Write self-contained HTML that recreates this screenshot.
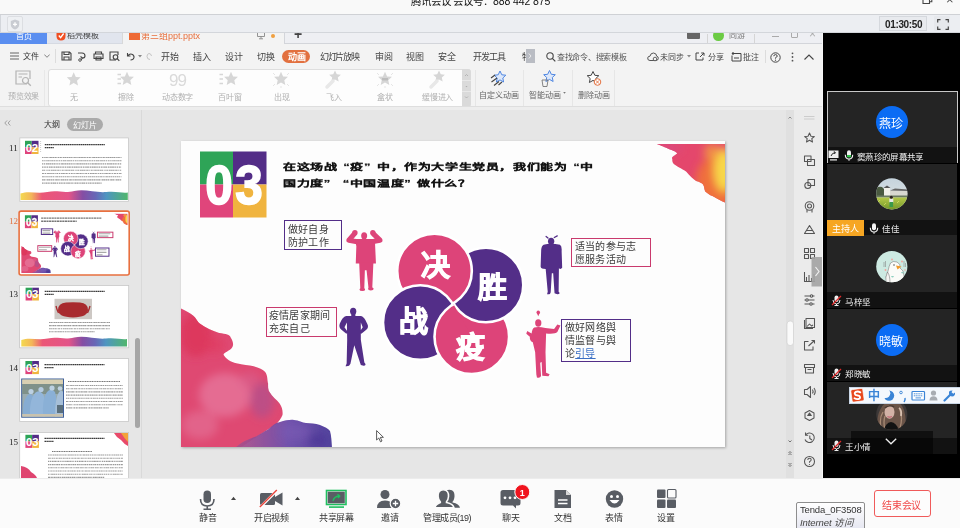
<!DOCTYPE html>
<html lang="zh-CN"><head><meta charset="utf-8">
<style>
*{margin:0;padding:0;box-sizing:border-box}
html,body{width:960px;height:528px;overflow:hidden;background:#fff;font-family:"Liberation Sans",sans-serif}
.a{position:absolute}
#title{left:0;top:0;width:960px;height:14px;background:#f9f9f9;border-bottom:1px solid #d9dadd}
#gbar{left:0;top:14px;width:960px;height:19px;background:#eceef2;border-bottom:1px solid #d7d9dd}
#wps{left:0;top:33px;width:823px;height:445px;background:#f3f3f3;overflow:hidden}
#rp{left:823px;top:33px;width:137px;height:445px;background:#000}
#bot{left:0;top:478px;width:960px;height:50px;background:#fbfbfb}
.t{position:absolute;white-space:nowrap;will-change:transform}
</style></head><body>
<div style="position:absolute;left:0;top:0;width:960px;height:33px;z-index:5">
<!-- title bar -->
<div class="a" style="left:0;top:0;width:960px;height:15px;background:#f9f9f9;border-bottom:1px solid #cfd1d5"></div>
<div class="t" style="left:410.5px;top:-7.5px;font-size:10.5px;color:#111;letter-spacing:-0.1px">腾讯会议 会议号：888 442 875</div>
<svg class="a" style="left:922px;top:-5px" width="11" height="10" viewBox="0 0 11 10"><path d="M1,2.5 H7.5 V8.5 H1 Z M3,2.5 V0.7 H9.8 V6.8 H7.5" fill="none" stroke="#444" stroke-width="1.1"/></svg>
<div class="t" style="left:946px;top:-8px;font-size:13px;color:#444">×</div>
<!-- grey bar -->
<div class="a" style="left:0;top:15px;width:960px;height:18px;background:#eceef2;border-bottom:1px solid #d3d6db;border-left:1px solid #d3d6db"></div>
<div class="a" style="left:7px;top:16px;width:16px;height:15.5px;border:1px solid #dcdee2;border-radius:2px;background:#eef0f3"></div>
<svg class="a" style="left:10.3px;top:18.7px" width="10" height="11" viewBox="0 0 10 11"><path d="M5,0.5 L9.2,2 L9.2,5.5 Q9.2,9 5,10.5 Q0.8,9 0.8,5.5 L0.8,2 Z" fill="#c9ccd2"/><path d="M5,3.3 V7.3 M3,5.3 H7" stroke="#fff" stroke-width="1.3"/></svg>
<div class="a" style="left:879px;top:16px;width:48px;height:15px;border:1px solid #d5d8dd;background:#e8eaee"></div>
<div class="t" style="left:884.5px;top:18.5px;font-size:10px;font-weight:bold;color:#222;letter-spacing:-0.35px">01:30:50</div>
<div class="a" style="left:934px;top:16px;width:16px;height:15px;background:#e6e8ec;border-radius:1px"></div>
<svg class="a" style="left:937px;top:18.5px" width="12" height="11" viewBox="0 0 12 11"><path d="M0.7,3.5 V0.7 H3.5 M8.5,0.7 H11.3 V3.5 M11.3,7.5 V10.3 H8.5 M3.5,10.3 H0.7 V7.5" fill="none" stroke="#444" stroke-width="1.2"/></svg>
</div>
<!-- WPS base -->
<div class="a" style="left:0;top:33px;width:823px;height:445px;background:#f3f3f3"></div>
<!-- tab strip -->
<div class="a" style="left:0;top:33px;width:46.5px;height:10.5px;background:#5a8ef0"></div>
<div class="t" style="left:15.5px;top:29.5px;font-size:8px;color:#fff">首页</div>
<div class="a" style="left:46.5px;top:33px;width:76px;height:10.5px;background:#e1e5ee;border-bottom:1px solid #d6dae2"></div>
<svg class="a" style="left:55.5px;top:32px" width="10" height="9" viewBox="0 0 10 9"><path d="M0.5,0 H9.5 V4 Q9.5,8.5 5,8.5 Q0.5,8.5 0.5,4 Z" fill="#f04e23"/><path d="M2.8,3.5 L4.6,5.6 L7.6,1.5" fill="none" stroke="#fff" stroke-width="1.3"/></svg>
<div class="t" style="left:67px;top:29px;font-size:8px;color:#444">稻壳模板</div>
<div class="a" style="left:122px;top:33px;width:1px;height:11px;background:#d8d8d8"></div>
<div class="a" style="left:129px;top:32px;width:11px;height:8px;background:#ee6a36"></div>
<div class="t" style="left:141px;top:28.5px;font-size:9px;color:#e8703f">第三组ppt.pptx</div>
<svg class="a" style="left:257px;top:33px" width="8" height="7" viewBox="0 0 8 7"><path d="M0.5,0 V3.5 H7.5 V0 M4,3.5 V5.5 M2,5.8 H6" fill="none" stroke="#888" stroke-width="0.9"/></svg>
<div class="a" style="left:271px;top:34px;width:4px;height:4px;background:#f0a040;border-radius:50%"></div>
<div class="a" style="left:283.5px;top:33px;width:540px;height:11px;background:#eeeff3;border-left:1px solid #d3d5da;border-bottom:1px solid #d3d5da"></div>
<div class="t" style="left:294px;top:26px;font-size:14px;font-weight:bold;color:#444">+</div>
<div class="a" style="left:687px;top:33px;width:13px;height:6px;background:#666;border-radius:0 0 1px 1px"></div>
<div class="a" style="left:707px;top:34px;width:1px;height:9px;background:#d5d5d5"></div>
<div class="a" style="left:713px;top:30px;width:10.5px;height:10.5px;background:#6ccb45;border-radius:50%"></div>
<div class="t" style="left:729px;top:29px;font-size:8px;color:#777">同游</div>
<div class="a" style="left:754px;top:34px;width:1px;height:9px;background:#d5d5d5"></div>
<div class="a" style="left:771.5px;top:35.5px;width:7px;height:1px;background:#aaa"></div>
<div class="a" style="left:791px;top:31px;width:7px;height:7px;border:1px solid #aaa;border-radius:1px"></div>
<div class="t" style="left:809px;top:27px;font-size:12px;color:#aaa">×</div>
<!-- menu row -->
<svg class="a" style="left:10px;top:52px" width="9" height="8" viewBox="0 0 9 8"><path d="M0,1 H9 M0,4 H9 M0,7 H9" stroke="#666" stroke-width="1.1"/></svg>
<div class="t" style="left:23px;top:50px;font-size:8px;letter-spacing:-0.3px;color:#333">文件</div>
<svg class="a" style="left:43.5px;top:54px" width="6" height="4" viewBox="0 0 6 4"><path d="M0.3,0.5 L3,3.3 L5.7,0.5" fill="none" stroke="#777" stroke-width="0.9"/></svg>
<div class="a" style="left:55px;top:49px;width:1px;height:14px;background:#dcdcdc"></div>
<svg class="a" style="left:61px;top:51px" width="11" height="10" viewBox="0 0 11 10"><path d="M1,1 H8.5 L10,2.5 V9 H1 Z M3,1 V3.5 H8 V1 M3,9 V6 H8 V9" fill="none" stroke="#444" stroke-width="1.1"/></svg>
<svg class="a" style="left:77px;top:51px" width="11" height="11" viewBox="0 0 11 11"><path d="M1,2 H5 Q8,2 8,5 Q8,7 5.5,7 M5.5,7 L3.5,5.5 M5.5,7 L4,8.8" fill="none" stroke="#444" stroke-width="1.1"/><circle cx="3" cy="9" r="1.3" fill="none" stroke="#444" stroke-width="0.9"/></svg>
<svg class="a" style="left:93px;top:51px" width="11" height="10" viewBox="0 0 11 10"><path d="M2.5,3 V1 H8.5 V3 M1,3 H10 V7.5 H1 Z M3,6 H8 V9 H3 Z" fill="none" stroke="#444" stroke-width="1.1"/></svg>
<svg class="a" style="left:109px;top:51px" width="11" height="11" viewBox="0 0 11 11"><path d="M7,9 H1 V1 H9 V4" fill="none" stroke="#444" stroke-width="1.1"/><circle cx="6.5" cy="6" r="2.3" fill="none" stroke="#444" stroke-width="1.1"/><path d="M8.2,7.7 L10.3,9.8" stroke="#444" stroke-width="1.2"/></svg>
<svg class="a" style="left:126px;top:52px" width="9" height="9" viewBox="0 0 9 9"><path d="M1.5,1 V4 H4.5 M1.8,3.8 Q3.5,1.5 5.8,2.2 Q8.3,3 8,5.5 Q7.5,8 4.5,8" fill="none" stroke="#444" stroke-width="1.1"/></svg>
<svg class="a" style="left:138px;top:55px" width="4" height="3" viewBox="0 0 4 3"><path d="M0,0 H4 L2,2.5 Z" fill="#888"/></svg>
<svg class="a" style="left:146px;top:52px" width="7" height="9" viewBox="0 0 7 9"><path d="M5.5,4 Q5,1.5 3,1.5 Q1,1.8 1,4.5 Q1.2,7.5 4,7.5" fill="none" stroke="#c4c4c4" stroke-width="1"/></svg>
<div class="t" style="left:160.5px;top:50px;font-size:9px;letter-spacing:-0.4px;color:#444">开始</div>
<div class="t" style="left:192.5px;top:50px;font-size:9px;letter-spacing:-0.4px;color:#444">插入</div>
<div class="t" style="left:225px;top:50px;font-size:9px;letter-spacing:-0.4px;color:#444">设计</div>
<div class="t" style="left:256.5px;top:50px;font-size:9px;letter-spacing:-0.4px;color:#444">切换</div>
<div class="a" style="left:281.5px;top:49.5px;width:28px;height:13px;background:#e2703f;border-radius:7px"></div>
<div class="t" style="left:287.5px;top:50px;font-size:9px;letter-spacing:-0.4px;font-weight:bold;color:#fff">动画</div>
<div class="t" style="left:319.5px;top:50px;font-size:9px;letter-spacing:-1.3px;color:#444">幻灯片放映</div>
<div class="t" style="left:374.5px;top:50px;font-size:9px;letter-spacing:-0.4px;color:#444">审阅</div>
<div class="t" style="left:406px;top:50px;font-size:9px;letter-spacing:-0.4px;color:#444">视图</div>
<div class="t" style="left:438px;top:50px;font-size:9px;letter-spacing:-0.4px;color:#444">安全</div>
<div class="t" style="left:472.5px;top:50px;font-size:9px;letter-spacing:-1px;color:#444">开发工具</div>
<div class="t" style="left:521.5px;top:50px;font-size:9px;color:#333;width:5px;overflow:hidden">特</div>
<div class="a" style="left:526px;top:48.5px;width:8.5px;height:14.5px;background:#b9bcc3"></div>
<svg class="a" style="left:528px;top:53px" width="4" height="6" viewBox="0 0 4 6"><path d="M0.8,0.5 L3,3 L0.8,5.5" fill="none" stroke="#eee" stroke-width="0.9"/></svg>
<svg class="a" style="left:545.5px;top:51.5px" width="10" height="10" viewBox="0 0 10 10"><circle cx="4" cy="4" r="3.2" fill="none" stroke="#444" stroke-width="1.1"/><path d="M6.3,6.3 L9.3,9.3" stroke="#444" stroke-width="1.2"/></svg>
<div class="t" style="left:556.5px;top:50.5px;font-size:8px;letter-spacing:-0.3px;color:#555">查找命令、搜索模板</div>
<svg class="a" style="left:646.5px;top:51.5px" width="12" height="10" viewBox="0 0 12 10"><path d="M3,8.5 Q0.5,8.5 0.7,6 Q1,4 3,4.2 Q3.5,1 6.5,1 Q9.5,1.2 9.7,4.2 Q11.5,4.5 11.3,6.5 Q11,8.5 9,8.5 Z" fill="none" stroke="#555" stroke-width="1"/><circle cx="8" cy="7" r="1.8" fill="#f3f3f3" stroke="#555" stroke-width="0.9"/></svg>
<div class="t" style="left:659.5px;top:50.5px;font-size:8px;letter-spacing:0px;color:#444">未同步</div>
<svg class="a" style="left:686.5px;top:55px" width="4" height="3" viewBox="0 0 4 3"><path d="M0,0 H4 L2,2.5 Z" fill="#888"/></svg>
<svg class="a" style="left:694.5px;top:52px" width="10" height="9" viewBox="0 0 10 9"><path d="M4,1 H1 V8 H8 V5.5 M5,5 L9,1 M6.2,1 H9 V3.8" fill="none" stroke="#444" stroke-width="1"/></svg>
<div class="t" style="left:707.5px;top:50.5px;font-size:8px;letter-spacing:0px;color:#444">分享</div>
<svg class="a" style="left:730.5px;top:51.5px" width="11" height="10" viewBox="0 0 11 10"><path d="M3,1.5 H10 V9 H1 V3.5 M3,6 H8 M1,1.5 H4" fill="none" stroke="#444" stroke-width="1"/><circle cx="2" cy="1.5" r="1.2" fill="#444"/></svg>
<div class="t" style="left:743px;top:50.5px;font-size:8px;letter-spacing:0px;color:#444">批注</div>
<div class="a" style="left:765px;top:50px;width:1px;height:13px;background:#dcdcdc"></div>
<svg class="a" style="left:770px;top:51.5px" width="11" height="11" viewBox="0 0 11 11"><circle cx="5.5" cy="5.5" r="4.7" fill="none" stroke="#444" stroke-width="1"/><path d="M3.8,4.2 Q3.8,2.6 5.5,2.6 Q7.2,2.6 7.2,4.1 Q7.2,5.1 5.5,5.7 V6.6" fill="none" stroke="#444" stroke-width="1"/><circle cx="5.5" cy="8.2" r="0.6" fill="#444"/></svg>
<svg class="a" style="left:791px;top:52px" width="3" height="10" viewBox="0 0 3 10"><circle cx="1.5" cy="1.3" r="0.9" fill="#555"/><circle cx="1.5" cy="5" r="0.9" fill="#555"/><circle cx="1.5" cy="8.7" r="0.9" fill="#555"/></svg>
<svg class="a" style="left:804px;top:53.5px" width="10" height="6" viewBox="0 0 10 6"><path d="M0.5,5.5 L5,1 L9.5,5.5" fill="none" stroke="#444" stroke-width="1.1"/></svg>
<!-- ribbon -->
<svg class="a" style="left:15px;top:70px" width="17" height="17" viewBox="0 0 17 17"><path d="M12,14 H1 V1 H15 V9" fill="none" stroke="#b4b4b4" stroke-width="1.2"/><path d="M3.5,4 H12.5 M3.5,7 H7" stroke="#b4b4b4" stroke-width="1.2"/><circle cx="10.5" cy="10.5" r="3" fill="none" stroke="#b4b4b4" stroke-width="1.2"/><path d="M12.7,12.7 L15.8,15.8" stroke="#b4b4b4" stroke-width="1.3"/></svg>
<div class="t" style="left:7.5px;top:89.5px;font-size:8px;letter-spacing:-0.2px;color:#b0b0b0">预览效果</div>
<div class="a" style="left:44px;top:70px;width:1px;height:36px;background:#e8e8e8"></div>
<div class="a" style="left:47.5px;top:69px;width:423px;height:37.5px;background:#fdfdfd;border:1px solid #dedede;border-radius:3px"></div>
<div class="a" style="left:462px;top:69px;width:8.5px;height:37.5px;background:#dadada;border-radius:0 3px 3px 0"></div>
<div class="a" style="left:462px;top:80px;width:8.5px;height:1px;background:#e8e8e8"></div>
<div class="a" style="left:462px;top:91px;width:8.5px;height:1px;background:#e8e8e8"></div>
<svg class="a" style="left:462px;top:70px" width="9" height="36" viewBox="0 0 9 36"><path d="M3,6 L4.5,4.5 L6,6" fill="none" stroke="#aaa" stroke-width="0.8"/><path d="M3.5,16 H5.5 L4.5,17.2 Z" fill="#aaa"/><path d="M3,26.5 L4.5,28 L6,26.5" fill="none" stroke="#aaa" stroke-width="0.8"/></svg>
<svg class="a" style="left:0;top:0" width="480" height="110" viewBox="0 0 480 110">
<defs><path id="st" d="M0,-7.2 L2.1,-2.6 L6.9,-2.2 L3.3,1.2 L4.3,6 L0,3.4 L-4.3,6 L-3.3,1.2 L-6.9,-2.2 L-2.1,-2.6 Z"/></defs>
<use href="#st" x="73.7" y="79.5" fill="#d6d6d6"/>
<use href="#st" x="127" y="79" fill="#d6d6d6"/><path d="M117.5,74.5 H121 M117.5,79 H121 M117.5,83.5 H121" stroke="#d6d6d6" stroke-width="1.3"/>
<text x="177.5" y="86" font-family="Liberation Sans" font-size="17" fill="#dadada" text-anchor="middle" letter-spacing="-1">99</text>
<use href="#st" x="231" y="79" fill="#d6d6d6"/><path d="M219.5,74.5 H223 M219.5,79 H223 M219.5,83.5 H223" stroke="#d6d6d6" stroke-width="1.3"/>
<use href="#st" x="281" y="79" fill="#d6d6d6"/><path d="M273,73 L275,75 M289,73 L287,75 M273,86 L275,84 M289,86 L287,84 M281,88 V86" stroke="#dedede" stroke-width="0.8"/>
<use href="#st" x="335" y="76.5" fill="#d6d6d6" transform="translate(335,76.5) scale(0.85) translate(-335,-76.5)"/><path d="M327,87 L333,81" stroke="#e8e8e8" stroke-width="3.5" stroke-linecap="round"/>
<use href="#st" x="385" y="79" fill="#d6d6d6"/><rect x="382" y="78" width="6" height="2.5" fill="#bdbdbd"/><path d="M377,73 L379,75 M393,73 L391,75 M377,86 L379,84 M393,86 L391,84 M385,88 V86" stroke="#dedede" stroke-width="0.8"/>
<use href="#st" x="439" y="76.5" fill="#d6d6d6" transform="translate(439,76.5) scale(0.85) translate(-439,-76.5)"/><path d="M431,87 L437,81" stroke="#e8e8e8" stroke-width="3.5" stroke-linecap="round"/>
</svg>
<div class="t" style="left:70px;top:91px;font-size:8px;color:#b0b0b0">无</div>
<div class="t" style="left:118px;top:91px;font-size:8px;letter-spacing:-0.2px;color:#b0b0b0">擦除</div>
<div class="t" style="left:162px;top:91px;font-size:8px;letter-spacing:-0.2px;color:#b0b0b0">动态数字</div>
<div class="t" style="left:218px;top:91px;font-size:8px;letter-spacing:-0.2px;color:#b0b0b0">百叶窗</div>
<div class="t" style="left:274px;top:91px;font-size:8px;letter-spacing:-0.2px;color:#b0b0b0">出现</div>
<div class="t" style="left:326px;top:91px;font-size:8px;letter-spacing:-0.2px;color:#b0b0b0">飞入</div>
<div class="t" style="left:377px;top:91px;font-size:8px;letter-spacing:-0.2px;color:#b0b0b0">盒状</div>
<div class="t" style="left:422px;top:91px;font-size:8px;letter-spacing:-0.2px;color:#b0b0b0">缓慢进入</div>
<div class="a" style="left:475px;top:70px;width:1px;height:36px;background:#e6e6e6"></div>
<div class="a" style="left:523px;top:70px;width:1px;height:36px;background:#e6e6e6"></div>
<div class="a" style="left:572px;top:70px;width:1px;height:36px;background:#e6e6e6"></div>
<div class="a" style="left:614px;top:70px;width:1px;height:36px;background:#e6e6e6"></div>
<svg class="a" style="left:480px;top:68px" width="140" height="22" viewBox="480 68 140 22">
<defs><path id="st2" d="M0,-6 L1.8,-2.2 L5.8,-1.8 L2.8,1 L3.6,5 L0,2.9 L-3.6,5 L-2.8,1 L-5.8,-1.8 L-1.8,-2.2 Z"/></defs>
<use href="#st2" x="500" y="77" fill="#dde8fa" stroke="#4f86e0" stroke-width="1"/>
<path d="M491,78 L495,75 M491.5,82 L497,78 M494,85.5 L499,81.5 M498.5,85 L502,82" stroke="#444" stroke-width="1.1"/>
<use href="#st2" x="549.5" y="76.5" fill="#dde8fa" stroke="#4f86e0" stroke-width="1"/>
<path d="M542,80 L548,80 L547,86.5 L543,86.5 Z" fill="none" stroke="#777" stroke-width="0.9"/>
<use href="#st2" x="593" y="77.5" fill="#fff" stroke="#444" stroke-width="1"/>
<circle cx="597.5" cy="82" r="3.3" fill="#fff" stroke="#e2703f" stroke-width="1"/><path d="M595.8,80.3 L599.2,83.7 M599.2,80.3 L595.8,83.7" stroke="#e2703f" stroke-width="0.9"/>
</svg>
<div class="t" style="left:479px;top:88.5px;font-size:8px;letter-spacing:0px;color:#666">自定义动画</div>
<div class="t" style="left:529px;top:88.5px;font-size:8px;letter-spacing:0px;color:#666">智能动画</div>
<svg class="a" style="left:562.5px;top:92px" width="3" height="2" viewBox="0 0 4 3"><path d="M0,0 H4 L2,2.5 Z" fill="#777"/></svg>
<div class="t" style="left:577.5px;top:88.5px;font-size:8px;letter-spacing:0px;color:#666">删除动画</div>
<!-- main bg -->
<div class="a" style="left:0;top:106px;width:823px;height:372px;background:#e6e6e6;border-top:1px solid #dedede"></div>
<div class="a" style="left:0;top:107px;width:823px;height:2.5px;background:#ededed"></div>
<div class="a" style="left:141px;top:109.5px;width:1px;height:369px;background:#d9d9d9"></div>
<div class="a" style="left:786px;top:109.5px;width:8px;height:369px;background:#e0e0e0"></div>
<div class="a" style="left:794px;top:109.5px;width:29px;height:369px;background:#ebebeb"></div>
<div class="a" style="left:181px;top:141px;width:544px;height:306px;background:#fdfdfd;box-shadow:0.5px 1px 2.5px rgba(0,0,0,.28)"></div>
<!-- THUMBS -->
<svg class="a" style="left:4px;top:120px" width="7" height="6" viewBox="0 0 7 6"><path d="M3,0.5 L0.8,3 L3,5.5 M6.3,0.5 L4.1,3 L6.3,5.5" fill="none" stroke="#999" stroke-width="0.9"/></svg>
<div class="t" style="left:43.5px;top:118px;font-size:8px;letter-spacing:-0.2px;color:#333">大纲</div>
<div class="a" style="left:66.5px;top:117.5px;width:36.5px;height:13px;background:#aaaaaa;border-radius:7px"></div>
<div class="t" style="left:73px;top:118.5px;font-size:8px;letter-spacing:0px;color:#fff">幻灯片</div>
<div class="t" style="left:9px;top:143px;font-family:'Liberation Serif',serif;font-size:9px;color:#222">11</div>
<div class="t" style="left:9px;top:216px;font-family:'Liberation Serif',serif;font-size:9px;color:#e2703f">12</div>
<div class="t" style="left:9px;top:289px;font-family:'Liberation Serif',serif;font-size:9px;color:#222">13</div>
<div class="t" style="left:9px;top:363px;font-family:'Liberation Serif',serif;font-size:9px;color:#222">14</div>
<div class="t" style="left:9px;top:437px;font-family:'Liberation Serif',serif;font-size:9px;color:#222">15</div>
<div class="a" style="left:134.5px;top:338px;width:5px;height:90px;background:#a6a6a6;border-radius:3px"></div>
<svg class="a" style="left:0;top:0" width="142" height="478" viewBox="0 0 142 478">
<defs><linearGradient id="rbw" x1="0" y1="0" x2="1" y2="0"><stop offset="0" stop-color="#f3d640"/><stop offset="0.1" stop-color="#f2b04a"/><stop offset="0.2" stop-color="#e9486a"/><stop offset="0.45" stop-color="#e0457e"/><stop offset="0.58" stop-color="#7a3e9c"/><stop offset="0.7" stop-color="#5a5ab0"/><stop offset="0.8" stop-color="#3f8cbc"/><stop offset="1" stop-color="#42b060"/></linearGradient><clipPath id="lpclip"><rect x="0" y="107" width="142" height="371"/></clipPath></defs>
<g clip-path="url(#lpclip)">
<rect x="19.8" y="137.9" width="108.7" height="63.4" fill="#fff" stroke="#c8c8c8" stroke-width="0.8"/>
<rect x="25" y="140.8" width="6.75" height="6.6" fill="#2ea457"/><rect x="31.75" y="140.8" width="6.75" height="6.6" fill="#532d87"/><rect x="25" y="147.4" width="6.75" height="6.6" fill="#e0457b"/><rect x="31.75" y="147.4" width="6.75" height="6.6" fill="#f0b43f"/><text x="31.75" y="151.62" font-family="Liberation Sans" font-weight="bold" font-size="11.34" fill="#fff" text-anchor="middle" letter-spacing="-0.2">02</text><path d="M40.6,141 v12" stroke="#bbb" stroke-width="0.8" stroke-dasharray="1 1"/><path d="M44.8,144.6 h60 M44.8,147.6 h9" stroke="#3a3a3a" stroke-width="1.2" stroke-dasharray="1.5 0.4"/><path d="M42,157.50 h79.5" stroke="#9a9a9a" stroke-width="1.1" stroke-dasharray="1.1 0.5 1.2 0.5 1.6 0.2 0.8 0.6 1.1 0.3 2.0 0.4 1.8 0.4 1.6 0.3"/><path d="M42,160.70 h79.5" stroke="#9a9a9a" stroke-width="1.1" stroke-dasharray="1.6 0.6 1.4 0.6 1.6 0.2 1.7 0.5 1.2 0.2 1.8 0.4 1.7 0.6 1.7 0.7"/><path d="M42,163.90 h79.5" stroke="#9a9a9a" stroke-width="1.1" stroke-dasharray="1.3 0.6 1.3 0.7 1.9 0.2 1.0 0.3 2.0 0.4 1.6 0.4 1.4 0.4 1.2 0.5"/><path d="M42,167.10 h79.5" stroke="#9a9a9a" stroke-width="1.1" stroke-dasharray="1.5 0.7 1.6 0.7 1.8 0.7 1.6 0.3 1.8 0.7 1.9 0.5 1.7 0.3 1.8 0.5"/><path d="M42,170.30 h79.5" stroke="#9a9a9a" stroke-width="1.1" stroke-dasharray="1.1 0.2 1.8 0.7 0.9 0.6 1.3 0.3 1.2 0.6 1.8 0.2 1.5 0.2 1.7 0.4"/><path d="M42,173.50 h79.5" stroke="#9a9a9a" stroke-width="1.1" stroke-dasharray="1.9 0.7 1.4 0.7 1.2 0.2 1.5 0.2 1.0 0.4 1.5 0.3 0.9 0.6 1.2 0.7"/><path d="M42,176.70 h79.5" stroke="#9a9a9a" stroke-width="1.1" stroke-dasharray="1.9 0.4 1.4 0.5 1.6 0.5 1.5 0.5 1.9 0.5 1.3 0.6 1.1 0.4 2.0 0.5"/><path d="M42,179.90 h79.5" stroke="#9a9a9a" stroke-width="1.1" stroke-dasharray="1.5 0.2 1.3 0.5 0.8 0.5 1.6 0.2 1.6 0.4 1.6 0.4 1.6 0.6 0.8 0.2"/><path d="M42,183.10 h59.6" stroke="#9a9a9a" stroke-width="1.1" stroke-dasharray="1.6 0.7 1.1 0.4 1.5 0.4 1.2 0.4 1.2 0.5 1.2 0.4 1.7 0.2 1.5 0.6"/><path d="M20.5,193.5 C29.1,190.5 36.6,194.0 47.3,192.0 S63.4,193.5 74.2,191.0 S95.6,193.0 106.3,192.0 S122.4,193.5 127.8,192.5 V200 H20.5 Z" fill="url(#rbw)" opacity="0.92"/>
<rect x="19.1" y="211.1" width="110.1" height="63.9" rx="2" fill="#fff" stroke="#e8703f" stroke-width="1.6"/>
<g transform="translate(21.2,213.2) scale(0.1955) translate(-181,-141)"><use href="#slideg"/>
<path d="M283,166 h310 M283,182 h182" stroke="#777" stroke-width="7" stroke-dasharray="11 2.5"/>
<rect x="284" y="221" width="58" height="29" fill="#fff" stroke="#532e88" stroke-width="5"/><path d="M290,230 h40 M290,243 h40" stroke="#aaa" stroke-width="6"/>
<rect x="571" y="238" width="79" height="28" fill="#fff" stroke="#c93a6d" stroke-width="5"/><path d="M577,246 h60 M577,258 h50" stroke="#aaa" stroke-width="6"/>
<rect x="266" y="307" width="71" height="29" fill="#fff" stroke="#c93a6d" stroke-width="5"/><path d="M272,315 h60 M272,328 h40" stroke="#aaa" stroke-width="6"/>
<rect x="561" y="319" width="69" height="42" fill="#fff" stroke="#532e88" stroke-width="5"/><path d="M567,328 h50 M567,341 h50 M567,354 h30" stroke="#aaa" stroke-width="6"/>
</g>
<rect x="19.6" y="285.5" width="109.1" height="62.3" fill="#fff" stroke="#c8c8c8" stroke-width="0.8"/>
<rect x="25.6" y="287.7" width="6.65" height="6.4" fill="#2ea457"/><rect x="32.25" y="287.7" width="6.65" height="6.4" fill="#532d87"/><rect x="25.6" y="294.09999999999997" width="6.65" height="6.4" fill="#e0457b"/><rect x="32.25" y="294.09999999999997" width="6.65" height="6.4" fill="#f0b43f"/><text x="32.25" y="298.20" font-family="Liberation Sans" font-weight="bold" font-size="11.02" fill="#fff" text-anchor="middle" letter-spacing="-0.2">03</text><path d="M44.7,291.3 h60 M44.7,294.3 h9" stroke="#3a3a3a" stroke-width="1.2" stroke-dasharray="1.5 0.4"/>
<rect x="54.5" y="298.8" width="37.5" height="20.4" fill="#cdc8c4"/>
<path d="M58,310 Q58,303 66,302.5 Q73,302 80,302.5 Q88,303 88,310 Q88,317 73,317.5 Q58,317 58,310 Z" fill="#a82a2e"/>
<path d="M56,306 Q57,310 58.5,313 M90,306 Q89,310 87.5,313" stroke="#a82a2e" stroke-width="1.3" fill="none"/>
<path d="M49,322.50 h61.0" stroke="#9a9a9a" stroke-width="1.1" stroke-dasharray="1.2 0.3 1.8 0.3 1.0 0.4 1.6 0.3 1.2 0.4 1.8 0.4 1.8 0.3 1.2 0.5"/><path d="M49,325.60 h61.0" stroke="#9a9a9a" stroke-width="1.1" stroke-dasharray="1.9 0.4 1.1 0.3 1.4 0.3 1.8 0.6 1.0 0.3 1.8 0.5 1.8 0.4 1.0 0.3"/><path d="M49,328.70 h61.0" stroke="#9a9a9a" stroke-width="1.1" stroke-dasharray="1.8 0.3 1.2 0.4 1.3 0.4 1.9 0.3 0.8 0.7 1.9 0.7 1.3 0.7 1.9 0.3"/><path d="M49,331.80 h45.8" stroke="#9a9a9a" stroke-width="1.1" stroke-dasharray="1.7 0.6 1.6 0.5 1.1 0.4 1.1 0.2 1.5 0.3 1.8 0.2 1.9 0.5 1.9 0.6"/><path d="M21.3,340.0 C29.8,337.0 37.2,340.5 47.7,338.5 S63.6,340.0 74.2,337.5 S95.3,339.5 105.9,338.5 S121.7,340.0 127.0,339.0 V346.5 H21.3 Z" fill="url(#rbw)" opacity="0.92"/>
<rect x="19.7" y="358.6" width="108.9" height="62.8" fill="#fff" stroke="#c8c8c8" stroke-width="0.8"/>
<rect x="25.4" y="361" width="6.75" height="6.55" fill="#2ea457"/><rect x="32.15" y="361" width="6.75" height="6.55" fill="#532d87"/><rect x="25.4" y="367.55" width="6.75" height="6.55" fill="#e0457b"/><rect x="32.15" y="367.55" width="6.75" height="6.55" fill="#f0b43f"/><text x="32.15" y="371.74" font-family="Liberation Sans" font-weight="bold" font-size="11.26" fill="#fff" text-anchor="middle" letter-spacing="-0.2">03</text><path d="M44.5,364.6 h60 M44.5,367.6 h9" stroke="#3a3a3a" stroke-width="1.2" stroke-dasharray="1.5 0.4"/>
<rect x="21.7" y="379" width="41.8" height="38.2" fill="#9aacb0" stroke="#3d5f9a" stroke-width="1"/>
<rect x="22.2" y="379.5" width="40.8" height="4.5" fill="#d8cfb2"/>
<rect x="22.2" y="384" width="40.8" height="10" fill="#7f918a"/>
<path d="M23,416.5 Q22,402 27,396 Q30,392 33,396 Q35,400 34,416.5 Z" fill="#86acd2"/>
<path d="M30,416.5 Q29,400 35,393 Q39,389 43,394 Q46,399 45,416.5 Z" fill="#93b6da"/>
<path d="M43,416.5 Q42,398 47,392 Q51,387 55,392 Q57,398 57,416.5 Z" fill="#8ab0d6"/>
<path d="M55,416.5 Q55,398 59,392 Q62,389 63,392 L63,416.5 Z" fill="#a6bfd8"/>
<circle cx="31" cy="391.5" r="2.6" fill="#bcd0e2"/><circle cx="41" cy="389.5" r="2.6" fill="#b5cbe0"/><circle cx="52" cy="388" r="2.6" fill="#bcd0e2"/><circle cx="60" cy="388.5" r="2.3" fill="#c0d2e2"/>
<rect x="57" y="405" width="6" height="8" fill="#2a3a40" opacity="0.6"/>
<rect x="22.2" y="414" width="40.8" height="2.7" fill="#c9c2ae"/>
<path d="M68,381.5 h52" stroke="#777" stroke-width="1.1" stroke-dasharray="1.2 0.5"/><path d="M66,385.50 h57.0" stroke="#9a9a9a" stroke-width="1.1" stroke-dasharray="1.9 0.5 0.8 0.6 1.0 0.3 1.6 0.5 1.3 0.7 1.5 0.4 1.1 0.6 1.4 0.6"/><path d="M66,388.70 h57.0" stroke="#9a9a9a" stroke-width="1.1" stroke-dasharray="1.2 0.3 1.4 0.6 1.0 0.6 1.9 0.6 1.8 0.2 1.6 0.6 0.9 0.3 1.1 0.5"/><path d="M66,391.90 h57.0" stroke="#9a9a9a" stroke-width="1.1" stroke-dasharray="1.3 0.4 1.7 0.2 0.9 0.3 0.9 0.2 2.0 0.6 0.9 0.5 1.2 0.4 1.2 0.5"/><path d="M66,395.10 h57.0" stroke="#9a9a9a" stroke-width="1.1" stroke-dasharray="1.5 0.4 1.0 0.4 0.9 0.5 1.7 0.4 0.9 0.3 1.2 0.5 1.7 0.4 1.8 0.5"/><path d="M66,398.30 h57.0" stroke="#9a9a9a" stroke-width="1.1" stroke-dasharray="1.3 0.4 1.4 0.6 1.3 0.5 1.4 0.3 1.4 0.5 0.9 0.4 1.3 0.6 1.9 0.4"/><path d="M66,401.50 h57.0" stroke="#9a9a9a" stroke-width="1.1" stroke-dasharray="1.9 0.6 1.1 0.4 0.9 0.6 1.6 0.6 1.8 0.5 1.7 0.5 0.9 0.5 0.8 0.3"/><path d="M66,404.70 h57.0" stroke="#9a9a9a" stroke-width="1.1" stroke-dasharray="1.7 0.2 0.9 0.2 1.9 0.3 0.8 0.6 0.9 0.6 1.6 0.6 1.9 0.5 1.8 0.2"/><path d="M66,407.90 h42.8" stroke="#9a9a9a" stroke-width="1.1" stroke-dasharray="1.7 0.5 1.7 0.3 1.7 0.7 0.9 0.4 1.5 0.6 1.1 0.3 1.1 0.5 1.7 0.4"/>
<rect x="19.7" y="432.5" width="108.9" height="60" fill="#fff" stroke="#c8c8c8" stroke-width="0.8"/>
<rect x="25.4" y="434.8" width="6.75" height="6.55" fill="#2ea457"/><rect x="32.15" y="434.8" width="6.75" height="6.55" fill="#532d87"/><rect x="25.4" y="441.35" width="6.75" height="6.55" fill="#e0457b"/><rect x="32.15" y="441.35" width="6.75" height="6.55" fill="#f0b43f"/><text x="32.15" y="445.54" font-family="Liberation Sans" font-weight="bold" font-size="11.26" fill="#fff" text-anchor="middle" letter-spacing="-0.2">03</text><path d="M44.5,438.4 h60 M44.5,441.4 h9" stroke="#3a3a3a" stroke-width="1.2" stroke-dasharray="1.5 0.4"/>
<path d="M114,433 L128,433 L128,446 Q124,444 121,440 Q116,437 114,433 Z" fill="#e84a6a"/><path d="M121,433 L128,433 L128,442 Q124,438 121,433Z" fill="#f3a23a"/>
<path d="M21,466 Q28,467 31,472 Q36,475 37,478 L21,478 Z" fill="#df4570"/>
<path d="M52,451.5 h40" stroke="#777" stroke-width="1.1" stroke-dasharray="1.2 0.5"/><path d="M48,455.00 h75.0" stroke="#9a9a9a" stroke-width="1.1" stroke-dasharray="1.2 0.4 1.2 0.4 0.9 0.5 2.0 0.4 1.7 0.3 1.6 0.6 1.6 0.5 1.4 0.5"/><path d="M48,458.20 h75.0" stroke="#9a9a9a" stroke-width="1.1" stroke-dasharray="1.9 0.3 0.9 0.6 1.9 0.5 1.3 0.6 1.0 0.3 1.0 0.5 1.2 0.3 1.6 0.7"/><path d="M48,461.40 h75.0" stroke="#9a9a9a" stroke-width="1.1" stroke-dasharray="1.2 0.6 1.3 0.6 1.5 0.3 1.1 0.2 1.4 0.4 1.0 0.4 1.2 0.6 1.0 0.7"/><path d="M48,464.60 h75.0" stroke="#9a9a9a" stroke-width="1.1" stroke-dasharray="1.4 0.5 1.4 0.6 1.8 0.5 1.4 0.6 1.8 0.4 1.7 0.7 1.4 0.3 1.1 0.6"/><path d="M48,467.80 h75.0" stroke="#9a9a9a" stroke-width="1.1" stroke-dasharray="1.6 0.7 1.8 0.3 1.0 0.3 1.0 0.6 1.8 0.6 1.1 0.6 1.2 0.4 1.7 0.2"/><path d="M48,471.00 h75.0" stroke="#9a9a9a" stroke-width="1.1" stroke-dasharray="0.9 0.6 1.2 0.4 1.5 0.5 0.8 0.4 1.3 0.4 1.1 0.5 1.9 0.4 1.5 0.3"/><path d="M48,474.20 h75.0" stroke="#9a9a9a" stroke-width="1.1" stroke-dasharray="1.1 0.5 0.9 0.6 1.9 0.2 1.9 0.4 1.7 0.6 1.2 0.5 1.6 0.6 1.1 0.6"/><path d="M48,477.40 h56.2" stroke="#9a9a9a" stroke-width="1.1" stroke-dasharray="2.0 0.5 1.4 0.3 1.4 0.4 1.7 0.5 1.5 0.3 1.6 0.5 1.0 0.6 1.6 0.3"/>
</g>
</svg>
<!-- SLIDE SVG -->
<svg class="a" style="left:0;top:0" width="960" height="528" viewBox="0 0 960 528">
<defs>
 <filter id="soft" x="-10%" y="-10%" width="120%" height="120%"><feGaussianBlur stdDeviation="0.6"/></filter><filter id="blur3" x="-50%" y="-50%" width="200%" height="200%"><feGaussianBlur stdDeviation="4"/></filter>
 <linearGradient id="splTR" x1="0" y1="0" x2="1" y2="0.3">
  <stop offset="0" stop-color="#df4f78"/><stop offset="0.45" stop-color="#e8425e"/><stop offset="0.7" stop-color="#f27a3c"/><stop offset="0.88" stop-color="#f7c23e"/><stop offset="1" stop-color="#f8dc48"/>
 </linearGradient>
 <radialGradient id="splBL" cx="0.1" cy="0.25" r="0.9">
  <stop offset="0" stop-color="#e0456a"/><stop offset="0.5" stop-color="#e05c85"/><stop offset="0.8" stop-color="#d35e8f"/><stop offset="1" stop-color="#b85a95"/>
 </radialGradient>
 <linearGradient id="splP" x1="0" y1="0" x2="1" y2="0">
  <stop offset="0" stop-color="#b05088"/><stop offset="0.3" stop-color="#8a4a98"/><stop offset="0.55" stop-color="#6a48a8"/><stop offset="1" stop-color="#4a3a98"/>
 </linearGradient>
 <clipPath id="blclip"><path d="M181,308.6 C186,311 190,313 193.3,315.8 C196,318 197,321 199,323 C206,328 213,331 219.2,333.1 C226,334 230,335 230.7,337.4 C233,341 234,345 232.1,347.5 C230,351 224,352 223.5,354.7 C226,359 231,362 236.4,363.3 C243,365 249,365 253.7,366.2 C259,368 263,369 265.2,372 C268,376 267,380 268.1,383.5 C268,387 268,390 269.5,392.1 C272,397 277,400 279.6,403.6 C282,407 283,411 282.5,415.1 C281,419 279,421 276.7,423.7 L240,448 L181,448 Z"/></clipPath><clipPath id="pclip"><path d="M235,448 C240,443 248,439 256,436.5 C261,434 264,431 268,429.5 C272,426 275,423 280,422 C285,420.5 290,419.5 294,420 C299,420.5 302,422.5 306,423 C311,423.5 315,423 320,425 C325,427 328,428.5 330,431 C331.5,436 331.5,442 332,448 Z"/></clipPath><clipPath id="trclip"><path d="M656.8,144 C662,146 664,147 666.6,147.9 C671,150 676,151 677.2,153.5 C674,156 671,157 672.3,159.1 C672,162 673,163 673.7,164 C679,168 683,169 686.3,171.8 C690,176 693,179 696.1,180.9 C700,182 702,183 703.1,184.4 C705,188 704,190 705.9,192.1 C709,195 712,196 714.3,197 C718,199 721,201 726,203 L726,144 Z"/></clipPath><clipPath id="slideclip"><rect x="181" y="141" width="544" height="306"/></clipPath>
</defs>
<g id="slideg">
<g clip-path="url(#slideclip)">
 <path filter="url(#soft)" fill="#e4466c" d="M656.8,144 C662,146 664,147 666.6,147.9 C671,150 676,151 677.2,153.5 C674,156 671,157 672.3,159.1 C672,162 673,163 673.7,164 C679,168 683,169 686.3,171.8 C690,176 693,179 696.1,180.9 C700,182 702,183 703.1,184.4 C705,188 704,190 705.9,192.1 C709,195 712,196 714.3,197 C718,199 721,201 726,203 L726,144 Z"/>
 <g clip-path="url(#trclip)"><g filter="url(#blur3)">
  <ellipse cx="668" cy="148" rx="14" ry="6" fill="#d94a80" opacity="0.8"/>
  <ellipse cx="716" cy="182" rx="20" ry="26" fill="#f07238" opacity="0.95"/>
  <ellipse cx="724" cy="170" rx="10" ry="22" fill="#f8d848"/>
  <ellipse cx="712" cy="152" rx="8" ry="8" fill="#f2a040" opacity="0.8"/>
 </g></g>
 <path filter="url(#soft)" fill="#df4a72" d="M181,308.6 C186,311 190,313 193.3,315.8 C196,318 197,321 199,323 C206,328 213,331 219.2,333.1 C226,334 230,335 230.7,337.4 C233,341 234,345 232.1,347.5 C230,351 224,352 223.5,354.7 C226,359 231,362 236.4,363.3 C243,365 249,365 253.7,366.2 C259,368 263,369 265.2,372 C268,376 267,380 268.1,383.5 C268,387 268,390 269.5,392.1 C272,397 277,400 279.6,403.6 C282,407 283,411 282.5,415.1 C281,419 279,421 276.7,423.7 L240,448 L181,448 Z"/>
 <g clip-path="url(#blclip)"><g filter="url(#blur3)">
  <ellipse cx="196" cy="335" rx="16" ry="22" fill="#dc3258" opacity="0.8"/>
  <ellipse cx="215" cy="345" rx="10" ry="8" fill="#e03a60" opacity="0.7"/>
  <ellipse cx="225" cy="395" rx="26" ry="22" fill="#e77aa0" opacity="0.7"/>
  <ellipse cx="200" cy="425" rx="18" ry="14" fill="#e5749a" opacity="0.6"/>
  <ellipse cx="262" cy="400" rx="12" ry="18" fill="#b2508c" opacity="0.75"/>
  <ellipse cx="250" cy="380" rx="10" ry="8" fill="#d9608e" opacity="0.6"/>
 </g></g>
 <path filter="url(#soft)" fill="url(#splP)" opacity="0.95" d="M235,448 C240,443 248,439 256,436.5 C261,434 264,431 268,429.5 C272,426 275,423 280,422 C285,420.5 290,419.5 294,420 C299,420.5 302,422.5 306,423 C311,423.5 315,423 320,425 C325,427 328,428.5 330,431 C331.5,436 331.5,442 332,448 Z"/>
 <g clip-path="url(#pclip)"><g filter="url(#blur3)"><ellipse cx="295" cy="432" rx="16" ry="8" fill="#7c5cb4" opacity="0.6"/><ellipse cx="318" cy="440" rx="10" ry="7" fill="#4a3494" opacity="0.7"/></g></g>
</g>
<!-- 03 block -->
<rect x="200" y="151.5" width="33" height="33" fill="#2ea457"/>
<rect x="233" y="151.5" width="33.5" height="33" fill="#532d87"/>
<rect x="200" y="184.5" width="33" height="33" fill="#e0457b"/>
<rect x="233" y="184.5" width="33.5" height="33" fill="#f0b43f"/>
<g font-family="Liberation Sans" font-weight="bold" font-size="55" fill="#fff" stroke="#fff" stroke-width="1.6" text-anchor="middle">
 <text transform="translate(219,204.3) scale(0.9,1)">0</text>
 <text transform="translate(249,204.3) scale(0.9,1)">3</text>
</g>
<!-- circles -->
<defs><clipPath id="yiclip"><path d="M453.2,303.8 L471.8,336.7 L490.4,369.6 L420,420 L370,330 L400,260 Z"/></clipPath></defs>
<g stroke="#fff" stroke-width="2.6">
 <circle cx="471.8" cy="336.7" r="37.3" fill="#dd4479"/>
 <circle cx="486" cy="285" r="37.3" fill="#532e88"/>
 <circle cx="434.5" cy="271" r="37.3" fill="#dd4479"/>
 <circle cx="420.3" cy="322.5" r="37.3" fill="#532e88"/>
 <circle cx="471.8" cy="336.7" r="37.3" fill="#dd4479" clip-path="url(#yiclip)"/>
</g>
<g font-family="Liberation Sans" font-weight="bold" font-size="29" fill="#fff" stroke="#fff" stroke-width="1.1" text-anchor="middle">
 <text x="435" y="276">决</text>
 <text x="492" y="298">胜</text>
 <text x="413" y="332">战</text>
 <text x="470" y="358">疫</text>
</g>
<!-- persons -->
<g fill="#dd4479" transform="translate(335,222) scale(0.1422)">
 <ellipse cx="205" cy="97" rx="21" ry="25"/>
 <rect x="192" y="105" width="26" height="22"/>
 <polyline fill="none" stroke="#dd4479" stroke-width="36" stroke-linejoin="round" stroke-linecap="round" points="165,140 98,128 136,84"/>
 <polyline fill="none" stroke="#dd4479" stroke-width="36" stroke-linejoin="round" stroke-linecap="round" points="250,140 316,128 270,84"/>
 <circle cx="140" cy="76" r="19"/><circle cx="266" cy="76" r="19"/>
 <path d="M140,120 L282,120 L282,160 L288,292 L146,292 L150,170 Z"/>
 <path d="M170,285 L270,285 L262,468 L236,468 L222,340 L210,340 L206,468 L178,468 Z"/>
 <ellipse cx="192" cy="474" rx="20" ry="11"/><ellipse cx="252" cy="470" rx="20" ry="11"/>
</g>
<g fill="#532e88" transform="translate(530,228) scale(0.13636)">
 <ellipse cx="155" cy="98" rx="23" ry="26"/>
 <line x1="118" y1="62" x2="132" y2="74" stroke="#532e88" stroke-width="9" stroke-linecap="round"/>
 <line x1="178" y1="70" x2="200" y2="58" stroke="#532e88" stroke-width="9" stroke-linecap="round"/>
 <path d="M100,122 Q150,110 220,122 Q235,132 232,170 L236,292 Q226,306 212,296 L212,300 L210,468 Q228,484 200,486 L180,478 L170,332 L160,332 L152,468 Q152,490 125,486 L130,468 L115,300 L100,298 Q78,300 78,285 L82,160 Q85,128 100,122 Z"/>
</g>
<g fill="#532e88" transform="translate(330,300) scale(0.13636)">
 <ellipse cx="170" cy="82" rx="23" ry="26"/>
 <rect x="156" y="95" width="30" height="28"/>
 <path d="M118,118 L228,118 Q252,124 272,172 Q288,200 266,218 L230,247 L216,236 L240,200 L226,165 L226,292 L252,458 Q272,480 246,483 L226,476 L178,332 L150,468 Q142,490 114,486 L122,466 L126,292 L124,165 L106,200 L132,236 L120,247 L84,218 Q62,200 72,172 Q92,124 118,118 Z"/>
</g>
<g fill="#dd4479" transform="translate(518,305) scale(0.1479)">
 <circle cx="137" cy="50" r="12"/><path d="M128,56 L146,56 L137,76 Z"/>
 <ellipse cx="137" cy="122" rx="21" ry="25"/>
 <path d="M110,152 Q140,144 185,156 L244,163 L266,132 L287,138 L266,182 Q250,198 190,192 L186,320 L190,458 L214,468 L206,482 L164,478 L160,386 L150,390 L156,480 Q150,496 128,490 L124,470 L116,320 L100,252 Q78,242 80,214 L56,194 L62,176 L92,192 Q96,158 110,152 Z"/>
</g>
</g>
</svg>


<!-- slide text -->
<div class="t" style="left:283px;top:158.5px;font-size:13px;font-weight:bold;color:#111;-webkit-text-stroke:0.3px #111;line-height:24.6px;transform:scaleY(0.66);transform-origin:0 0;letter-spacing:0.6px">在这场战<span style="display:inline-block;width:13px;text-align:right">“</span>疫<span style="display:inline-block;width:13px;text-align:left">”</span>中，作为大学生党员，我们能为<span style="display:inline-block;width:13px;text-align:right">“</span>中<br>国力度<span style="display:inline-block;width:13px;text-align:left">”</span><span style="display:inline-block;width:13px;text-align:right">“</span>中国温度<span style="display:inline-block;width:13px;text-align:left">”</span>做什么？</div>
<div class="a" style="left:283.5px;top:220px;width:58.5px;height:30px;border:1.8px solid #532e88"></div>
<div class="t" style="left:288px;top:223px;font-family:'Liberation Serif',serif;font-size:10px;letter-spacing:0.2px;line-height:13px;color:#3a3a3a">做好自身<br>防护工作</div>
<div class="a" style="left:570.5px;top:237.5px;width:80px;height:29px;border:1.8px solid #c93a6d"></div>
<div class="t" style="left:575px;top:239.5px;font-family:'Liberation Serif',serif;font-size:10px;letter-spacing:0.2px;line-height:13px;color:#3a3a3a">适当的参与志<br>愿服务活动</div>
<div class="a" style="left:265.5px;top:306.5px;width:71.5px;height:30px;border:1.8px solid #c93a6d"></div>
<div class="t" style="left:269px;top:308.5px;font-family:'Liberation Serif',serif;font-size:10px;letter-spacing:0.2px;line-height:13px;color:#3a3a3a">疫情居家期间<br>充实自己</div>
<div class="a" style="left:561px;top:319px;width:70px;height:42.5px;border:1.8px solid #532e88"></div>
<div class="t" style="left:565px;top:320.5px;font-family:'Liberation Serif',serif;font-size:10px;letter-spacing:0.2px;line-height:13px;color:#3a3a3a">做好网络舆<br>情监督与舆<br>论<span style="color:#3b6fc4;text-decoration:underline">引导</span></div>

<!-- WPS SIDEBAR -->
<svg class="a" style="left:782px;top:107px" width="41" height="371" viewBox="782 107 41 371">
 <path d="M788.5,118.5 L790,117 L791.5,118.5" fill="none" stroke="#777" stroke-width="0.8"/>
 <path d="M804,116.5 h10.5 M804,119 h10.5" stroke="#c4c4c4" stroke-width="0.8"/>
 <g fill="none" stroke="#555" stroke-width="1.05" stroke-linejoin="round">
  <!-- star with rain -->
  <path d="M809.5,133 L811,136.2 L814.3,136.5 L811.8,138.7 L812.5,142 L809.5,140.3 L806.5,142 L807.2,138.7 L804.7,136.5 L808,136.2 Z"/>
  <!-- swap windows -->
  <rect x="804.5" y="156" width="6.5" height="5.5"/><rect x="807.5" y="159.5" width="7" height="6"/>
  <!-- shapes -->
  <circle cx="807.8" cy="185.5" r="3"/><rect x="808" y="179.5" width="6.5" height="6"/>
  <!-- badge -->
  <circle cx="809.5" cy="206" r="4.3"/><circle cx="809.5" cy="206" r="2"/><path d="M807,210 v2.5 M812,210 v2.5"/>
  <!-- triangle layers -->
  <path d="M809.5,225.5 L814.5,233.5 H804.5 Z M806.5,230.5 H812.5"/>
  <!-- grid -->
  <rect x="804.5" y="248.5" width="4" height="4"/><rect x="810.5" y="248.5" width="4" height="4"/><rect x="804.5" y="254.5" width="4" height="4"/><rect x="810.5" y="254.5" width="4" height="4"/>
  <!-- chart -->
  <path d="M804.5,272 V281.5 H815 M806.5,281 v-4 M809,281 v-6 M811.5,281 v-3 M814,281 v-7"/>
  <!-- sliders -->
  <path d="M804.5,296 h10 M804.5,300 h10 M804.5,304 h10"/><circle cx="811.5" cy="296" r="1.2" fill="#ececec"/><circle cx="807" cy="300" r="1.2" fill="#ececec"/><circle cx="811" cy="304" r="1.2" fill="#ececec"/>
  <!-- image stack -->
  <rect x="806" y="318.5" width="8.5" height="9"/><path d="M804.5,320 v8.5 h8.5 M807,326.5 l2.5,-2.5 l2,2 l1.5,-1"/>
  <!-- share -->
  <path d="M808.5,341.5 H804.5 V350 H813 V346.5 M808.5,346 L814.5,340.5 M811.5,340.5 H814.5 V343.5"/>
  <!-- archive -->
  <rect x="804.5" y="364.5" width="10" height="3"/><path d="M805.5,367.5 V373 H813.5 V367.5 M807.5,369.5 h4"/>
  <!-- speaker -->
  <path d="M804.5,389.5 h2.5 l3.5,-3 v11 l-3.5,-3 h-2.5 Z M812.5,389.5 q1.2,2 0,4 M814,388 q2.5,3.5 0,7"/>
  <!-- hex -->
  <path d="M809.5,410.5 L814,413 V418 L809.5,420.5 L805,418 V413 Z"/><path d="M809.5,413 l-1.8,2.5 h3.6 Z" fill="#555"/>
  <!-- history -->
  <path d="M805.5,435 A4.8,4.8 0 1 1 805,439.5 M805.5,432.5 V435.2 H808.2 M809.8,435.5 V438.5 L812,440"/>
  <!-- help -->
  <circle cx="809.5" cy="461.5" r="5"/><path d="M807.8,460 Q807.8,458.2 809.5,458.2 Q811.2,458.2 811.2,459.8 Q811.2,461 809.5,461.7 V462.8"/>
 </g>
 <circle cx="809.5" cy="464.5" r="0.6" fill="#555"/>
 <rect x="787" y="321" width="6.5" height="24.5" rx="3" fill="#fafafa" stroke="#d0d0d0" stroke-width="0.7"/>
 <path d="M788.5,440.5 l1.5,1.5 l1.5,-1.5" fill="none" stroke="#666" stroke-width="0.9"/>
 <path d="M788.5,453 l1.5,-1.5 l1.5,1.5 M788.5,455 l1.5,-1.5 l1.5,1.5" fill="none" stroke="#666" stroke-width="0.9"/>
 <path d="M788.5,463 l1.5,1.5 l1.5,-1.5 M788.5,465 l1.5,1.5 l1.5,-1.5" fill="none" stroke="#666" stroke-width="0.9"/>
 <rect x="811.5" y="257" width="11.5" height="29.5" fill="#a3a3a3" opacity="0.9"/>
 <path d="M815.5,267 L819,271.5 L815.5,276" fill="none" stroke="#f4f4f4" stroke-width="1.1"/>
</svg>
<div class="a" style="left:822px;top:33px;width:1px;height:445px;background:#f7f7f7"></div>
<!-- cursor -->
<svg class="a" style="left:376px;top:430px" width="9" height="13" viewBox="0 0 9 13"><path d="M0.6,0.6 L0.6,10 L2.8,8 L4.5,11.8 L6,11 L4.3,7.4 L7.4,7.3 Z" fill="#fff" stroke="#333" stroke-width="0.8"/></svg>
<!-- right panel -->
<div class="a" style="left:823px;top:33px;width:137px;height:445px;background:#000"></div>
<!-- RIGHT PANEL CONTENT -->
<div class="a" style="left:827px;top:91.0px;width:130px;height:72px;background:#242424"></div><div class="a" style="left:827px;top:147.0px;width:130px;height:15.8px;background:#121212"></div><div class="a" style="left:827px;top:163.7px;width:130px;height:72px;background:#242424"></div><div class="a" style="left:827px;top:219.7px;width:130px;height:15.8px;background:#121212"></div><div class="a" style="left:827px;top:236.4px;width:130px;height:72px;background:#242424"></div><div class="a" style="left:827px;top:292.4px;width:130px;height:15.8px;background:#121212"></div><div class="a" style="left:827px;top:309.1px;width:130px;height:72px;background:#242424"></div><div class="a" style="left:827px;top:365.1px;width:130px;height:15.8px;background:#121212"></div><div class="a" style="left:827px;top:381.8px;width:130px;height:72px;background:#242424"></div><div class="a" style="left:827px;top:437.8px;width:130px;height:15.8px;background:#121212"></div>
<div class="a" style="left:827px;top:91px;width:130.5px;height:72px;border:1px solid #c8c8c8;border-bottom:none"></div>
<div class="a" style="left:875.5px;top:105.5px;width:32.5px;height:32.5px;border-radius:50%;background:#0b6cf4"></div>
<div class="t" style="left:879px;top:114px;font-size:12px;color:#fff;letter-spacing:-0.5px">燕珍</div>
<svg class="a" style="left:828px;top:150px" width="11" height="11" viewBox="0 0 11 11"><rect x="0.5" y="0.5" width="10" height="7.5" fill="#eee"/><path d="M3,6 Q4,3 7,2.6 M5.8,1.5 L7.5,2.6 L6.3,4" fill="none" stroke="#222" stroke-width="1"/><rect x="2" y="9.3" width="7" height="1.2" fill="#eee"/></svg>
<svg class="a" style="left:843.5px;top:150px" width="10" height="11" viewBox="0 0 10 11"><rect x="3" y="0.3" width="4" height="7" rx="2" fill="#f2f2f2"/><rect x="3" y="5" width="4" height="2.3" fill="#31c24a"/><path d="M1.3,4.8 Q1.3,9 5,9 Q8.7,9 8.7,4.8 M5,9 V10.7" fill="none" stroke="#f2f2f2" stroke-width="1.1"/></svg>
<div class="t" style="left:857px;top:150px;font-size:8.5px;color:#f2f2f2;letter-spacing:-0.7px">窦燕珍的屏幕共享</div>
<svg class="a" style="left:875px;top:177px" width="33" height="33" viewBox="0 0 33 33">
 <defs><clipPath id="av2"><circle cx="16.8" cy="16.8" r="15.6"/></clipPath>
 <linearGradient id="sky2" x1="0" y1="0" x2="0" y2="1"><stop offset="0" stop-color="#c4d2dc"/><stop offset="1" stop-color="#e4e8e6"/></linearGradient>
 <linearGradient id="fld2" x1="0" y1="0" x2="0" y2="1"><stop offset="0" stop-color="#b4c848"/><stop offset="1" stop-color="#6f9428"/></linearGradient></defs>
 <g clip-path="url(#av2)">
  <rect width="33" height="33" fill="url(#sky2)"/>
  <path d="M0,12 Q3,9 7,10 L9,12 L9,20 L0,20 Z" fill="#4a5a40"/>
  <rect x="9" y="11" width="6" height="8" fill="#f0efe8"/><path d="M8.5,11 L12,8.5 L15.5,11 Z" fill="#555"/>
  <rect x="15" y="13.5" width="18" height="6" fill="#d8d8d0"/><path d="M15,13.5 L20,11.5 L33,12.5 L33,14 Z" fill="#666"/>
  <rect x="0" y="18.5" width="33" height="2" fill="#6a7a60"/>
  <rect x="0" y="20.5" width="33" height="13" fill="url(#fld2)"/>
  <path d="M3,25 l2,-2 M9,28 l2,-2 M22,26 l2,-2 M27,29 l2,-2" stroke="#d6e060" stroke-width="0.8"/>
  <rect x="14.3" y="21.5" width="4" height="4" fill="#e8e8e8"/><rect x="14.5" y="25" width="3.6" height="5" fill="#3a9a4a"/><circle cx="16.3" cy="20.3" r="1.5" fill="#2a2020"/>
 </g>
</svg>
<div class="a" style="left:827px;top:219.8px;width:37px;height:15.8px;background:#f6a623"></div>
<div class="t" style="left:832px;top:222px;font-size:9px;color:#fff;letter-spacing:-0.2px">主持人</div>
<svg class="a" style="left:869px;top:222.5px" width="10" height="11" viewBox="0 0 10 11"><rect x="3" y="0.3" width="4" height="7" rx="2" fill="#f2f2f2"/><path d="M1.3,4.8 Q1.3,9 5,9 Q8.7,9 8.7,4.8 M5,9 V10.7" fill="none" stroke="#f2f2f2" stroke-width="1.1"/></svg>
<div class="t" style="left:882px;top:222px;font-size:8.5px;color:#f2f2f2;letter-spacing:-0.3px">佳佳</div>
<svg class="a" style="left:875px;top:250px" width="33" height="33" viewBox="0 0 33 33">
 <defs><clipPath id="av3"><circle cx="16.8" cy="16.6" r="15.6"/></clipPath></defs>
 <g clip-path="url(#av3)">
  <rect width="33" height="33" fill="#cdeae2"/>
  <path d="M12,33 Q10,26 13,21 Q14,16 15.5,13 Q18,10.5 22,12 Q26,14 25,18 Q29,20 29,26 L28,33 Z" fill="#fbfbf8" stroke="#666" stroke-width="0.5"/>
  <path d="M11,33 Q10,27 12.5,22 Q15,25 15,33 Z" fill="#f5f5f2" stroke="#666" stroke-width="0.5"/>
  <path d="M21,15.5 L26.5,16.5 L22.5,19.5 Z" fill="#f09a2a"/>
  <path d="M16,26 Q17.5,29 19,26 M26,22 Q27.5,25 28.5,22" fill="#8fd0c0"/>
  <circle cx="19" cy="15" r="0.7" fill="#333"/>
  <circle cx="17" cy="9.5" r="0.9" fill="#f3a09a"/><circle cx="27" cy="11.5" r="0.9" fill="#f3a09a"/><circle cx="10.5" cy="20" r="0.9" fill="#f3a09a"/><circle cx="30" cy="20" r="0.8" fill="#f3a09a"/>
  <path d="M9,12 v5 M10.5,11 v6 M29,11 v6 M30.5,13 v4" stroke="#777" stroke-width="0.5"/>
 </g>
</svg>
<svg class="a" style="left:830.5px;top:295px" width="11" height="11" viewBox="0 0 11 11"><rect x="3.5" y="0.5" width="4" height="6.5" rx="2" fill="#eee"/><path d="M2,5 Q2,9 5.5,9 Q9,9 9,5 M5.5,9 V10.5 M3.5,10.5 H7.5" fill="none" stroke="#eee" stroke-width="1"/><path d="M1,10 L10,1" stroke="#e02a2a" stroke-width="1.3"/></svg>
<div class="t" style="left:845px;top:294.5px;font-size:8.5px;color:#f2f2f2;letter-spacing:-0.3px">马梓坚</div>
<div class="a" style="left:875.5px;top:323.5px;width:32.5px;height:32.5px;border-radius:50%;background:#0b6cf4"></div>
<div class="t" style="left:879px;top:332px;font-size:12px;color:#fff;letter-spacing:-0.5px">晓敏</div>
<svg class="a" style="left:830.5px;top:367.5px" width="11" height="11" viewBox="0 0 11 11"><rect x="3.5" y="0.5" width="4" height="6.5" rx="2" fill="#eee"/><path d="M2,5 Q2,9 5.5,9 Q9,9 9,5 M5.5,9 V10.5 M3.5,10.5 H7.5" fill="none" stroke="#eee" stroke-width="1"/><path d="M1,10 L10,1" stroke="#e02a2a" stroke-width="1.3"/></svg>
<div class="t" style="left:845px;top:367px;font-size:8.5px;color:#f2f2f2;letter-spacing:-0.3px">郑晓敏</div>
<svg class="a" style="left:875px;top:397.5px" width="33" height="33" viewBox="0 0 33 33">
 <defs><clipPath id="av5"><circle cx="16.8" cy="16.2" r="15.6"/></clipPath></defs>
 <g clip-path="url(#av5)">
  <rect width="33" height="33" fill="#3c3838"/>
  <path d="M3,33 Q1,20 5,12 Q9,3 17,3 Q26,3 29,12 Q32,22 30,33 Z" fill="#6a5448"/>
  <path d="M6,30 Q4,20 8,14 M25,30 Q28,20 25,12 M10,32 Q8,24 10,18" stroke="#a88a74" stroke-width="1.3" fill="none"/>
  <ellipse cx="14.5" cy="14" rx="5" ry="6.8" fill="#d2b2a6"/>
  <path d="M10,10 Q14,6 19,9" stroke="#4a3a32" stroke-width="1.5" fill="none"/>
  <path d="M12.5,18.5 Q14.5,19.8 16.8,18.5" stroke="#c06070" stroke-width="1.4" fill="none"/>
  <path d="M9,33 Q10,25 16,24 Q22,25 24,33 Z" fill="#121212"/>
  <path d="M24,10 Q27,12 26,18" stroke="#d8c0b0" stroke-width="1.8" fill="none"/>
 </g>
</svg>
<div class="a" style="left:849px;top:387px;width:111px;height:16.5px;background:#f4f8fd;border:1px solid #c9d6e6;border-right:none"></div>
<svg class="a" style="left:849px;top:387px" width="111" height="17" viewBox="0 0 111 17">
 <rect x="2.5" y="2" width="12" height="12.5" rx="1.5" fill="#e8471c" stroke="#fff" stroke-width="0.6" transform="rotate(-8 8.5 8.5)"/>
 <path d="M11.3,5.3 Q9,4 6.5,5 Q5,6 6.5,7.8 L10,8.8 Q11.8,10 10.5,11.6 Q8,12.8 5.5,11.3" fill="none" stroke="#fff" stroke-width="1.9" stroke-linecap="round"/>
 <text x="24.5" y="13" font-family="Liberation Sans" font-weight="bold" font-size="12" fill="#3a84d6" text-anchor="middle">中</text>
 <defs><mask id="moonm"><rect x="30" y="0" width="20" height="17" fill="#fff"/><circle cx="36.5" cy="6.3" r="4.8" fill="#000"/></mask></defs><circle cx="40" cy="8.6" r="5.2" fill="#3a84d6" mask="url(#moonm)"/>
 <circle cx="52" cy="5.5" r="1.3" fill="none" stroke="#3a84d6" stroke-width="0.9"/><path d="M56,11 Q56.5,13 55,15" stroke="#3a84d6" stroke-width="1.5" fill="none"/>
 <rect x="63" y="4.5" width="12.5" height="8.5" rx="0.8" fill="#fff" stroke="#3a84d6" stroke-width="1.2"/><path d="M64.8,6.8 h9 M64.8,8.8 h9" stroke="#3a84d6" stroke-width="0.9" stroke-dasharray="1.3 0.5"/><path d="M66.5,10.9 h5.5" stroke="#3a84d6" stroke-width="0.9"/>
 <circle cx="84.5" cy="6" r="2.6" fill="#a8acb2"/><path d="M80.5,13.5 Q80.8,9.3 84.5,9.3 Q88.2,9.3 88.5,13.5 Z" fill="#a8acb2"/>
 <path d="M95.5,13.5 L101,8" stroke="#3a84d6" stroke-width="2.2" stroke-linecap="round"/><path d="M100,4.8 Q99.5,9 103,9.5 Q106.5,9.2 106,5.5 L104.3,6.8 L102.5,5.3 L103.6,3.5 Q100.5,3.6 100,4.8 Z" fill="#3a84d6"/>
</svg>
<div class="a" style="left:851px;top:431px;width:82px;height:22.5px;background:rgba(0,0,0,0.55)"></div>
<svg class="a" style="left:885px;top:437.5px" width="12" height="7" viewBox="0 0 12 7"><path d="M0.8,0.8 L6,5.8 L11.2,0.8" fill="none" stroke="#eee" stroke-width="1.3"/></svg>
<svg class="a" style="left:830.5px;top:440px" width="11" height="11" viewBox="0 0 11 11"><rect x="3.5" y="0.5" width="4" height="6.5" rx="2" fill="#eee"/><path d="M2,5 Q2,9 5.5,9 Q9,9 9,5 M5.5,9 V10.5 M3.5,10.5 H7.5" fill="none" stroke="#eee" stroke-width="1"/><path d="M1,10 L10,1" stroke="#e02a2a" stroke-width="1.3"/></svg>
<div class="t" style="left:845px;top:439.5px;font-size:8.5px;color:#f2f2f2;letter-spacing:-0.3px">王小倩</div>
<!-- bottom bar -->
<div class="a" style="left:0;top:478px;width:960px;height:50px;background:#fbfbfb"></div>
<!-- BOTTOM TOOLBAR -->
<div class="a" style="left:0;top:478px;width:960px;height:1px;background:#ececec"></div>
<svg class="a" style="left:0;top:478px" width="960" height="50" viewBox="0 478 960 50">
 <!-- mic -->
 <rect x="203.5" y="490.5" width="7.5" height="12.5" rx="3.75" fill="#595d64"/>
 <path d="M200.5,499 Q200.5,506 207.25,506 Q214,506 214,499 M207.25,506 V509.3 M203.5,509.3 H211" fill="none" stroke="#595d64" stroke-width="1.6"/>
 <path d="M231,500 L233.5,496.8 L236,500 Z" fill="#444"/>
 <!-- video -->
 <rect x="260" y="493" width="15" height="12" rx="1.5" fill="#595d64"/>
 <path d="M275,497 L282.5,492.5 V505.5 L275,501 Z" fill="#595d64"/>
 <path d="M260,507.5 L277,490.5" stroke="#fff" stroke-width="2.6"/>
 <path d="M259.8,507 L276.8,490" stroke="#e8453c" stroke-width="1.4"/>
 <path d="M295,500 L297.5,496.8 L300,500 Z" fill="#444"/>
 <!-- share screen -->
 <rect x="326.5" y="490.5" width="19.5" height="14" fill="none" stroke="#1fbf5f" stroke-width="1.6"/>
 <rect x="327.7" y="491.7" width="17.1" height="11.6" fill="#595d64"/>
 <rect x="329" y="506.3" width="15" height="1.6" fill="#1fbf5f"/>
 <path d="M333,501 Q334,496.5 339,496 M337.5,494.3 L339.8,496 L338,498.2" fill="none" stroke="#1fbf5f" stroke-width="1.3"/>
 <!-- invite -->
 <circle cx="385" cy="494.5" r="4.5" fill="#595d64"/>
 <path d="M377,508 Q377,500.5 385,500.5 Q390,500.5 391.5,503 L391.5,508 Z" fill="#595d64"/>
 <circle cx="395.5" cy="503.5" r="5.3" fill="#595d64" stroke="#fbfbfb" stroke-width="1.2"/>
 <path d="M395.5,500.8 V506.2 M392.8,503.5 H398.2" stroke="#fff" stroke-width="1.3"/>
 <!-- manage members -->
 <path transform="translate(6,0)" d="M443.3,489.8 C447.5,489.8 448.8,493 448.5,496.5 C448.3,499 447.5,500.8 446.5,501.8 L446.5,502.5 C451,503.5 453.5,505 454,507.8 H434.8 C435.3,505 437.8,503.5 440.3,502.5 L440.3,501.8 C439.1,500.8 438.3,499 438.1,496.5 C437.8,493 439.1,489.8 443.3,489.8 Z" fill="#595d64"/>
 <path d="M443.3,489.8 C447.5,489.8 448.8,493 448.5,496.5 C448.3,499 447.5,500.8 446.5,501.8 L446.5,502.5 C451,503.5 453.5,505 454,507.8 H434.8 C435.3,505 437.8,503.5 440.3,502.5 L440.3,501.8 C439.1,500.8 438.3,499 438.1,496.5 C437.8,493 439.1,489.8 443.3,489.8 Z" fill="#595d64" stroke="#fbfbfb" stroke-width="1.6"/>
 <!-- chat -->
 <path d="M500.5,492.5 Q500.5,490 503,490 H518 Q520.5,490 520.5,492.5 V503 Q520.5,505.5 518,505.5 H516 V508.5 L513,505.5 H503 Q500.5,505.5 500.5,503 Z" fill="#595d64"/>
 <circle cx="505" cy="497.8" r="1.4" fill="#fff"/><circle cx="510" cy="497.8" r="1.4" fill="#fff"/><circle cx="515" cy="497.8" r="1.4" fill="#fff"/>
 <circle cx="522.3" cy="492" r="7.5" fill="#f0141e" stroke="#fbfbfb" stroke-width="1"/>
 <text x="522.3" y="495.5" font-family="Liberation Sans" font-weight="bold" font-size="9" fill="#fff" text-anchor="middle">1</text>
 <!-- doc -->
 <path d="M554.5,490 H566 L571,495 V508 H554.5 Z" fill="#595d64"/>
 <path d="M566,490 V495 H571" fill="#d8d8d8"/>
 <path d="M558,500 H567.5 M558,503.5 H567.5" stroke="#fff" stroke-width="1.4"/>
 <!-- emoji -->
 <circle cx="614.5" cy="499" r="8.7" fill="#595d64"/>
 <circle cx="611.5" cy="496.5" r="1.5" fill="#fff"/><circle cx="617.5" cy="496.5" r="1.5" fill="#fff"/>
 <path d="M609.5,500 Q614.5,507 619.5,500 Z" fill="#fff"/>
 <!-- settings -->
 <rect x="657" y="489.5" width="8.5" height="8.5" rx="1" fill="#595d64"/>
 <rect x="667.5" y="489.5" width="8.5" height="8.5" rx="1" fill="none" stroke="#595d64" stroke-width="1.1"/>
 <rect x="657" y="499.5" width="8.5" height="8.5" rx="1" fill="#595d64"/>
 <rect x="667" y="499.5" width="9" height="8.5" rx="1" fill="#595d64"/>
</svg>
<div class="t" style="left:199px;top:511px;font-size:9px;color:#333;letter-spacing:-0.5px">静音</div>
<div class="t" style="left:254px;top:511px;font-size:9px;color:#333;letter-spacing:-0.5px">开启视频</div>
<div class="t" style="left:318.5px;top:511px;font-size:9px;color:#333;letter-spacing:-0.5px">共享屏幕</div>
<div class="t" style="left:380.5px;top:511px;font-size:9px;color:#333;letter-spacing:-0.5px">邀请</div>
<div class="t" style="left:422.5px;top:511px;font-size:9px;color:#333;letter-spacing:-0.5px">管理成员(19)</div>
<div class="t" style="left:501.5px;top:511px;font-size:9px;color:#333;letter-spacing:-0.5px">聊天</div>
<div class="t" style="left:554px;top:511px;font-size:9px;color:#333;letter-spacing:-0.5px">文档</div>
<div class="t" style="left:605px;top:511px;font-size:9px;color:#333;letter-spacing:-0.5px">表情</div>
<div class="t" style="left:657px;top:511px;font-size:9px;color:#333;letter-spacing:-0.5px">设置</div>
<div class="a" style="left:874px;top:490px;width:57px;height:27px;border:1px solid #f05b5b;border-radius:3px;background:#fdfdfd"></div>
<div class="t" style="left:882px;top:496.5px;font-size:10px;color:#f04848;letter-spacing:-0.2px">结束会议</div>
<div class="a" style="left:796px;top:502px;width:68.5px;height:30px;border:1px solid #8e8e8e;border-radius:2px;background:linear-gradient(#ffffff,#e4e5f0)"></div>
<div class="t" style="left:799.5px;top:503.5px;font-size:9.5px;color:#333;letter-spacing:-0.15px">Tenda_0F3508</div>
<div class="t" style="left:799.5px;top:515px;font-size:9.5px;font-style:italic;color:#444;letter-spacing:-0.1px">Internet 访问</div>

</body></html>
